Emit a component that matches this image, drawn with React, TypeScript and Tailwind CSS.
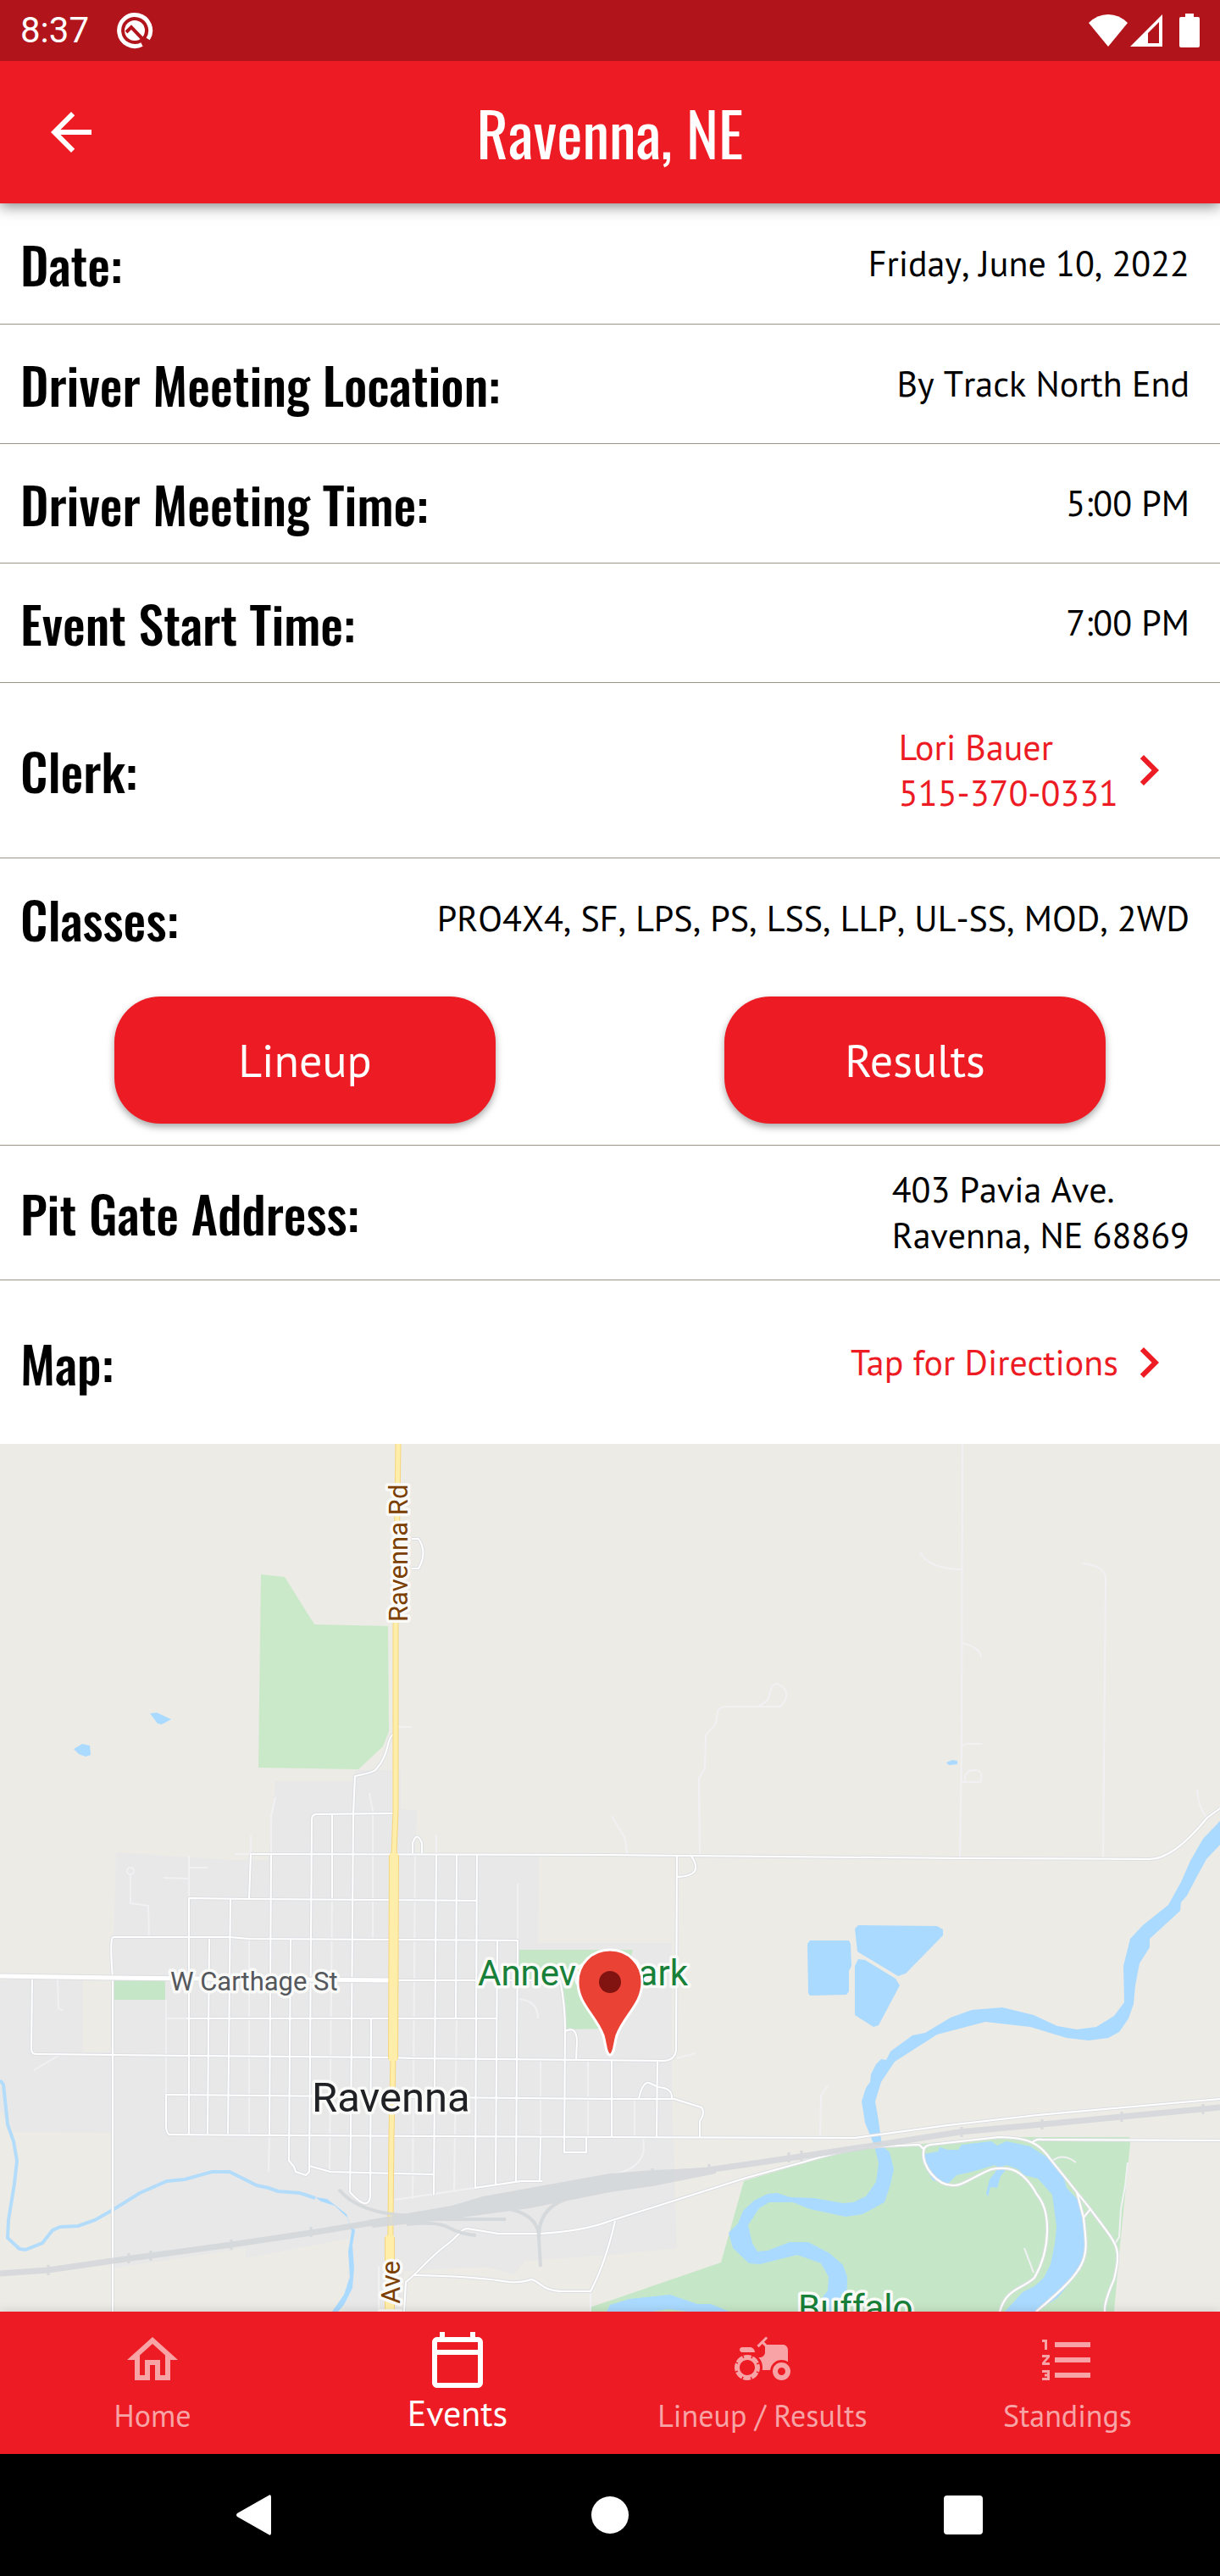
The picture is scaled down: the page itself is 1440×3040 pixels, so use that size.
import type { ReactNode } from "react";
import type { IconType } from "react-icons";
import {
  MdAgriculture,
  MdArrowBack,
  MdChevronRight,
  MdFormatListNumbered,
  MdOutlineCalendarToday,
  MdOutlineHome,
} from "react-icons/md";

const rail =
  "M0 2683 57 2679 133 2668 273 2649 367 2635 434 2624 533 2608 597 2594 720 2572 770 2566 835 2561 931 2547 1037 2531 1133 2516 1230 2507 1324 2498 1440 2487";

const railYard =
  "M434 2620 533 2603 570 2592 720 2565 770 2561 845 2558 845 2565 770 2580 720 2587 625 2606 530 2619 440 2629Z";

const railBranches = [
  "M400 2584Q424 2613 487 2615",
  "M496 2619H597",
  "M480 2625Q515 2621 530 2629T562 2638",
  "M592 2605Q636 2612 636 2640L638 2675",
  "M666 2596Q636 2607 636 2640",
];

const railTicks = [
  [57, 2679],
  [152, 2665],
  [178, 2662],
  [273, 2649],
  [367, 2634],
  [770, 2565],
  [837, 2560],
  [931, 2546],
  [946, 2544],
  [1135, 2516],
  [1230, 2507],
  [1324, 2498],
  [1420, 2489],
];

// Driveways and alleys
const minorRoads = [
  "M1136 1704 1135 2061 1133 2193",
  "M1086 1832Q1097 1852 1136 1852",
  "M1136 1939Q1158 1945 1158 1956",
  "M1135 2061 1140 2058H1159",
  "M1135 2103H1157Q1162 2089 1150 2089T1139 2103",
  "M1277 1845Q1305 1848 1305 1863L1302 2193",
  "M826 2188 825 2099 832 2086 833 2048 845 2034 847 2020Q849 2014 858 2014L921 2014Q936 1998 920 1988 911 1983 908 2002 905 2009 896 2013",
  "M722 2143 737 2168Q740 2178 740 2189",
  "M1413 2112Q1414 2131 1424 2145",
  "M467 2038H486",
  "M277 2188H296M296 2166V2188",
  "M325 2121 320 2143V2188",
  "M436 2116 440 2137V2288",
  "M515 2165V2188M490 2189 487 2595",
  "M223 2190V2240M193 2216 223 2217M223 2204H245",
  "M154 2212V2246L175 2249 176 2287",
  "M611 2223 611 2290",
  "M68 2335 69 2370 74 2373M40 2443 72 2424",
  "M294 2288V2518M318 2520 317 2563",
  "M392 2240 389 2563",
  "M197 2382H221M196 2360V2472",
  "M610 2359Q635 2360 635 2382",
  "M638 2431V2522M694 2431V2522",
  "M539 2382 536 2587",
  "M749 2477V2523M759 2524Q766 2559 720 2567",
  "M799 2429 821 2423M968 2523 969 2473 977 2461",
  "M466 2596 560 2582",
  "M1242 2550Q1255 2540 1270 2552",
  "M1331 2552 1328 2580 1323 2607 1321 2640 1316 2648",
  "M1209 2653 1220 2682",
  "M447 2675V2728M697 2704V2728",
];

const streets = [
  "M296 2188 720 2189 1133 2193 1357 2194Q1385 2194 1425 2145L1440 2134",
  "M465 2140 372 2141Q368 2142 368 2148L365 2563 361 2567 349 2563 347 2557 341 2550 343 2288",
  "M465 2046C455 2052 461 2070 443 2089Q436 2093 419 2096L417 2141 414 2520 413 2587",
  "M438 2382 437 2593Q434 2610 413 2587",
  "M487 2187V2175Q492 2160 498 2175V2187",
  "M486 1816H494Q505 1832 494 1851H486",
  "M392 2141V2240",
  "M296 2188 294 2241M320 2188 318 2520",
  "M223 2519V2240L294 2241 563 2243",
  "M272 2240 269 2518M247 2288 245 2518",
  "M133 2728V2334Q129 2286 134 2286L271 2286 294 2288 611 2290 609 2574",
  "M515 2188 512 2590M539 2188 538 2382M563 2188 561 2582M587 2290 585 2578",
  "M459 2337H661Q667 2365 667 2397L666 2540H692V2522",
  "M667 2397Q681 2390 681 2410L680 2431",
  "M221 2382H587",
  "M38 2335 37 2417Q37 2424 42 2424L133 2425 221 2426 459 2428 488 2429 784 2432Q798 2431 798 2417L799 2189",
  "M815 2189Q833 2214 799 2215",
  "M195 2472 720 2477H796L828 2487Q833 2493 826 2503V2523",
  "M754 2476Q759 2456 766 2458L777 2463Q794 2464 793 2477",
  "M776 2432 775 2523M722 2431V2523",
  "M196 2472V2510Q197 2519 200 2519L340 2520 720 2522 1009 2523 1119 2508 1225 2496 1440 2477",
  "M365 2556 390 2563 512 2566M638 2522 637 2574",
  "M560 2582 615 2574H640",
  "M477 2728 479 2693C494 2682 505 2665 530 2647 542 2638 544 2630 552 2630L588 2636H636Q689 2633 720 2621L881 2570 950 2551Q1010 2533 1041 2533L1085 2531 1090 2536",
  "M489 2685Q560 2686 601 2693 616 2694 627 2690C637 2692 640 2704 665 2704H697Q715 2670 726 2621",
  "M1180 2728C1188 2700 1206 2702 1221 2688 1240 2655 1241 2610 1224 2590 1205 2555 1185 2557 1170 2560 1150 2568 1135 2580 1126 2579 1105 2580 1088 2555 1090 2540 1090 2533 1094 2532 1098 2531L1179 2522C1215 2522 1228 2531 1239 2547L1271 2587 1287 2607C1320 2652 1324 2650 1315 2690Q1303 2717 1304 2728",
  "M1271 2587 1279 2617C1284 2665 1289 2673 1223 2728",
  "M1279 2617 1287 2607M1218 2529Q1222 2524 1230 2525L1440 2526",
];

const river =
  "M1440 2149 1420 2170 1405 2196 1394 2221 1379 2248 1349 2272 1334 2288 1326 2320 1327 2363 1315 2379 1294 2392 1271 2395 1248 2391 1220 2378 1183 2369 1147 2372 1122 2381 1092 2399 1077 2402 1051 2421 1046 2431 1040 2430 1034 2436 1028 2448 1027 2457 1022 2464 1017 2480 1021 2505 1032 2532 1037 2553 1034 2575 1022 2592 1007 2599 995 2600 961 2594 933 2593 917 2588 906 2589 890 2597 877 2609 871 2624 860 2635 865 2653 884 2671 897 2672 941 2661 969 2671 978 2687 977 2703 970 2712 979 2728 999 2728 1000 2687 995 2673 979 2659 954 2646 932 2646 906 2656 894 2657 888 2647 883 2626 896 2606 908 2599 936 2599 956 2607 998 2616 1018 2613 1044 2599 1051 2578 1055 2560 1050 2540 1041 2532 1037 2503 1033 2480 1040 2457 1056 2433 1106 2401 1163 2386 1216 2392 1259 2405 1285 2408 1308 2405 1321 2398 1332 2382 1338 2365 1340 2343 1345 2317 1357 2298 1357 2288 1393 2255 1394 2245 1401 2237 1413 2214 1424 2194 1440 2177Z";

const lakes = [
  "M177 2022 185 2021 202 2029 191 2035 186 2034Z",
  "M87 2064 97 2058 106 2060 107 2071 101 2073 93 2070Z",
  "M1117 2080 1124 2077 1130 2078 1130 2082 1120 2083Z",
  "M956 2290H1002L1004 2294 1005 2320 1002 2326V2350L999 2354 956 2355 954 2352 953 2294Z",
  "M1013 2272 1106 2273 1113 2277V2284L1069 2329 1060 2332 1012 2303 1009 2276Z",
  "M1013 2312 1021 2313 1057 2335 1062 2343 1037 2390 1031 2392 1009 2378V2320Z",
  "M716 2728 720 2720 743 2713 791 2708 823 2719 839 2719 861 2728H812L789 2725 770 2728Z",
  "M1091 2542 1107 2539 1109 2534 1119 2537 1131 2537 1135 2531 1170 2527 1177 2532 1188 2527 1216 2533 1239 2548 1255 2568 1259 2582 1273 2597 1281 2630V2660L1273 2682 1248 2712 1223 2728H1186L1207 2705 1221 2698 1232 2688 1240 2672 1245 2648 1247 2628 1242 2590 1225 2571 1209 2567 1202 2560 1188 2555 1179 2558 1174 2555 1147 2563 1129 2567 1119 2577 1101 2573 1092 2557Z",
  "M1179 2558 1168 2572 1164 2588 1166 2593 1169 2581 1177 2582 1181 2568 1187 2561Z",
  "M372 2593 386 2595 409 2613 413 2625 419 2632 416 2650 418 2677 416 2700 406 2720 399 2728H392L406 2708 413 2687 411 2657 415 2633 410 2617 395 2603 379 2598Z",
];

function EventMap() {
  return (
    <svg
      viewBox="0 1704 1440 1024"
      preserveAspectRatio="xMidYMid slice"
      role="img"
      aria-label="Map of Ravenna"
      className="block w-full h-full font-['Roboto',sans-serif]"
    >
      <rect y="1704" width="1440" height="1024" fill="#ecebe6" />

      {/* town area */}
      <path
        fill="#e8e8e8"
        d="M137 2186 271 2195H317L325 2102H419V2089H473V2135L492 2136 490 2187 636 2189 635 2293H793V2473L799 2653 720 2661 620 2668 607 2684 574 2675 477 2680 473 2728H406L415 2641 290 2665V2653L133 2677 131 2517 18 2516 0 2490V2337L133 2330Z"
      />
      <path fill="#ecebe6" d="M98 2337H131V2422H98Z" />

      {/* parks */}
      <path fill="#c9e9c9" d="M308 1858 336 1861 371 1917 458 1919 459 2043 452 2061 423 2088 305 2086Z" />
      <g fill="#c6e7c7">
        <path d="M134 2337H195V2360H134Z" />
        <path d="M612 2301H747L735 2340 722 2394 668 2395 663 2337H612Z" />
        <path d="M878 2574 950 2552 995 2538 1037 2533 1087 2530 1179 2522H1333L1334 2530 1321 2660 1315 2728H696V2723L720 2715 851 2670Z" />
      </g>

      {/* water */}
      <g fill="#aadaff">
        <path d={river} />
        {lakes.map((d) => (
          <path key={d} d={d} />
        ))}
      </g>
      <path
        fill="none"
        stroke="#b3dcfb"
        strokeWidth="4"
        d="M0 2455 4 2460 9 2507 16 2527 20 2550 17 2577 10 2620 9 2641 23 2654 30 2655 50 2647 62 2632 71 2628 92 2627 112 2620 133 2608 165 2588 197 2574 218 2572 250 2563 271 2563 303 2579 317 2582 328 2586 354 2588 372 2594"
      />

      {/* roads */}
      <g fill="none" strokeLinejoin="round">
        <g stroke="#f1f1f4" strokeWidth="2">
          <circle cx="154" cy="2208" r="4" />
          {minorRoads.map((d) => (
            <path key={d} d={d} />
          ))}
        </g>
        <g stroke="#dcdee2" strokeWidth="4">
          {streets.map((d) => (
            <path key={d} d={d} />
          ))}
        </g>
        <g stroke="#ffffff" strokeWidth="2">
          {streets.map((d) => (
            <path key={d} d={d} />
          ))}
        </g>
        <path d="M0 2332 133 2334 459 2337" stroke="#dcdee2" strokeWidth="7" />
        <path d="M0 2332 133 2334 459 2337" stroke="#ffffff" strokeWidth="5" />

        <g stroke="#f5d57d">
          <path d="M470 1704 467 1920 467 2137 465 2189 464 2430 462 2520 460 2728" strokeWidth="7" />
          <path d="M465 2189 464 2430M460 2640V2728" strokeWidth="12" />
        </g>
        <g stroke="#ffeeaa">
          <path d="M470 1704 467 1920 467 2137 465 2189 464 2430 462 2520 460 2728" strokeWidth="5" />
          <path d="M465 2187 464 2432M460 2638V2728" strokeWidth="10" />
        </g>
      </g>

      {/* railway */}
      <g fill="none" stroke="#d5d8db" opacity="0.9">
        <path d={rail} strokeWidth="7" />
        <path d={railYard} fill="#d5d8db" stroke="none" />
        {railBranches.map((d) => (
          <path key={d} d={d} strokeWidth="4" />
        ))}
        {railTicks.map(([x, y]) => (
          <path key={x} d={`M${x} ${y - 6}V${y + 6}`} strokeWidth="3" />
        ))}
      </g>

      {/* place names */}
      <g strokeWidth="7" strokeLinejoin="round" paintOrder="stroke" stroke="#fafaf9">
        <text transform="translate(481 1914) rotate(-90)" fontSize="31" fill="#7b3f00">
          Ravenna Rd
        </text>
        <text transform="translate(472 2668) rotate(-90)" textAnchor="end" fontSize="31" fill="#7b3f00">
          Grand Ave
        </text>
        <text x="201" y="2349" fontSize="31" fill="#54575c">
          W Carthage St
        </text>
        <text x="368" y="2492" fontSize="49" fill="#202124">
          Ravenna
        </text>
        <text x="564" y="2343" fontSize="42" fill="#188038">
          Annevar Park
        </text>
        <text x="942" y="2738" fontSize="42" fill="#188038">
          Buffalo
        </text>
      </g>

      <path
        d="M720 2301C698 2301 682 2318 682 2339 682 2365 703 2378 712 2402 715 2412 715 2425 720 2425S725 2412 728 2402C737 2378 758 2365 758 2339 758 2318 742 2301 720 2301Z"
        fill="#ea4335"
        stroke="#ffffff"
        strokeWidth="3"
      />
      <circle cx="720" cy="2339" r="13" fill="#811411" />
    </svg>
  );
}

function StatusBar() {
  return (
    <div className="relative z-10 h-[72px] bg-[#b1151b] flex items-center justify-between px-6 text-white">
      <div className="flex items-center gap-8">
        <span className="font-['Roboto',sans-serif] text-[42px] leading-[48px]">8:37</span>
        <svg viewBox="0 0 44 44" className="size-11" fill="none" aria-hidden="true">
          <path d="M30.500 38.500A18.500 18.500 0 1 1 37.700 32" stroke="white" strokeWidth="5" />
          <circle cx="22" cy="22" r="12" fill="white" />
          <path d="M12 24 18 18 36 37" stroke="#b1151b" strokeWidth="4" />
        </svg>
      </div>
      <div className="flex items-center">
        <svg viewBox="0 0 46 38" className="w-[46px] h-[38px]" fill="white" aria-hidden="true">
          <path d="M0 10Q10 0 23 0T46 10L23 38Z" />
        </svg>
        <svg viewBox="0 0 38 38" className="w-[38px] h-[38px] ml-[3px]" aria-hidden="true">
          <path fill="white" fillRule="evenodd" d="M0 38 38 0V38ZM21 22V34H34V9Z" />
        </svg>
        <svg viewBox="0 0 24 40" className="w-6 h-10 ml-5" fill="white" aria-hidden="true">
          <path d="M7 0H17V4H22Q24 4 24 6V38Q24 40 22 40H2Q0 40 0 38V6Q0 4 2 4H7Z" />
        </svg>
      </div>
    </div>
  );
}

function Label({ children }: { children: ReactNode }) {
  return (
    <h2 className="font-['Oswald','Liberation_Sans_Narrow',sans-serif] font-medium text-[60px] leading-[72px] whitespace-nowrap">
      {children}
    </h2>
  );
}

function Row({ label, className, children }: { label: string; className: string; children: ReactNode }) {
  return (
    <div className={`flex items-center justify-between pl-6 border-b border-[#9d9488] ${className}`}>
      <Label>{label}</Label>
      {children}
    </div>
  );
}

function Value({ children }: { children: ReactNode }) {
  return <p className="pr-9 [font-kerning:none]">{children}</p>;
}

const tabs: { name: string; icon: IconType; active?: boolean }[] = [
  { name: "Home", icon: MdOutlineHome },
  { name: "Events", icon: MdOutlineCalendarToday, active: true },
  { name: "Lineup / Results", icon: MdAgriculture },
  { name: "Standings", icon: MdFormatListNumbered },
];

export default function App() {
  return (
    <div className="min-h-screen flex flex-col bg-white text-black font-['PT_Sans','Noto_Sans',sans-serif] text-[42px] leading-[54px]">
      <StatusBar />

      {/* HEADER */}
      <header className="relative h-[168px] bg-[#ed1c24] text-white grid grid-cols-[1fr_auto_1fr] items-center px-12 shadow-[0_3px_16px_rgba(0,0,0,0.5)]">
        <button type="button" aria-label="Back" className="size-[72px]">
          <MdArrowBack className="size-[72px]" />
        </button>
        <h1 className="font-['Oswald','Liberation_Sans_Narrow',sans-serif] text-[72px] leading-[84px] [font-kerning:none]">
          Ravenna, NE
        </h1>
      </header>

      {/* EVENT DETAILS */}
      <main className="grow flex flex-col">
        <Row label="Date:" className="h-[143px]">
          <Value>Friday, June 10, 2022</Value>
        </Row>
        <Row label="Driver Meeting Location:" className="h-[141px]">
          <Value>By Track North End</Value>
        </Row>
        <Row label="Driver Meeting Time:" className="h-[141px]">
          <Value>5:00 PM</Value>
        </Row>
        <Row label="Event Start Time:" className="h-[141px]">
          <Value>7:00 PM</Value>
        </Row>
        <Row label="Clerk:" className="h-[207px]">
          <a href="tel:515-370-0331" className="flex items-center pr-12 text-[#ed1c24]">
            <span>
              Lori Bauer
              <br />
              515-370-0331
            </span>
            <MdChevronRight className="size-[72px]" />
          </a>
        </Row>

        <section className="border-b border-[#9d9488] pb-[25px]">
          <div className="flex items-center justify-between pl-6 h-[141px]">
            <Label>Classes:</Label>
            <Value>PRO4X4, SF, LPS, PS, LSS, LLP, UL-SS, MOD, 2WD</Value>
          </div>
          <div className="grid grid-cols-2 justify-items-center pt-[22px] text-[54px] text-white">
            <button type="button" className="w-[450px] h-[150px] rounded-[54px] bg-[#ed1c24] shadow-[0_4px_8px_rgba(0,0,0,0.35)]">
              Lineup
            </button>
            <button type="button" className="w-[450px] h-[150px] rounded-[54px] bg-[#ed1c24] shadow-[0_4px_8px_rgba(0,0,0,0.35)]">
              Results
            </button>
          </div>
        </section>

        <Row label="Pit Gate Address:" className="h-[159px]">
          <Value>
            403 Pavia Ave.
            <br />
            Ravenna, NE 68869
          </Value>
        </Row>
        <div className="flex items-center justify-between pl-6 h-[193px]">
          <Label>Map:</Label>
          <a href="#directions" className="flex items-center pr-12 text-[#ed1c24]">
            Tap for Directions
            <MdChevronRight className="size-[72px]" />
          </a>
        </div>
        <div className="grow basis-0 min-h-[480px] overflow-hidden">
          <EventMap />
        </div>
      </main>

      {/* TABS */}
      <nav className="relative h-[168px] bg-[#ed1c24] grid grid-cols-4 shadow-[0_0_12px_rgba(0,0,0,0.15)]">
        {tabs.map(({ name, icon: Icon, active }) => (
          <a
            key={name}
            href="#"
            aria-current={active ? "page" : undefined}
            className={`flex flex-col items-center pt-[21px] ${
              active ? "text-white text-[42px]" : "text-[#f8a4a7] text-[36px] leading-[60px]"
            }`}
          >
            <Icon className="size-[72px]" />
            {name}
          </a>
        ))}
      </nav>

      {/* SYSTEM NAVIGATION */}
      <div className="h-[144px] bg-black grid grid-cols-3 items-center justify-items-center px-[94px]">
        <button type="button" aria-label="System back">
          <svg viewBox="0 0 48 48" className="size-12" fill="white">
            <path d="M38 1Q41 -1 41 3V45Q41 49 38 47L1 26Q-1 24 1 22Z" />
          </svg>
        </button>
        <button type="button" aria-label="System home" className="size-11 rounded-full bg-white" />
        <button type="button" aria-label="Recent apps" className="size-[46px] rounded-[4px] bg-white" />
      </div>
    </div>
  );
}
